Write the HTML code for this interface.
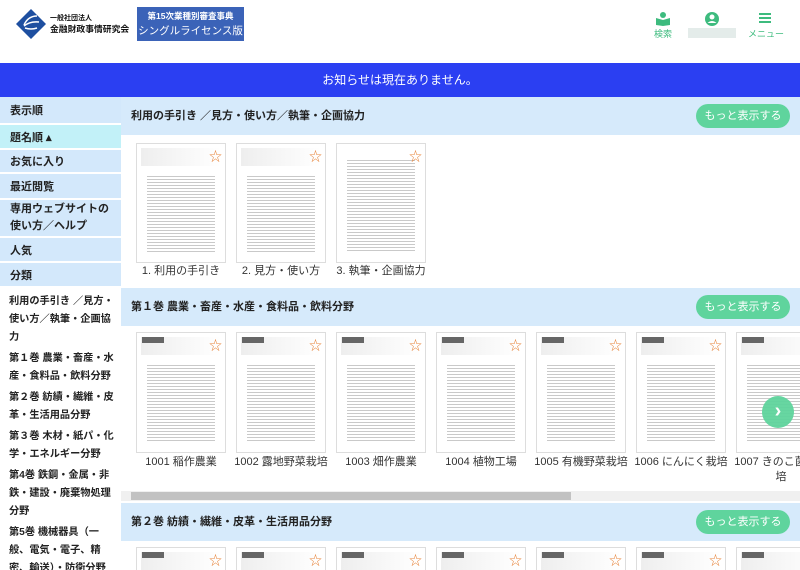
<!DOCTYPE html>
<html><head><meta charset="utf-8"><style>
*{margin:0;padding:0;box-sizing:border-box}
body{width:800px;height:570px;overflow:hidden;background:#fff;font-family:"Liberation Sans","Noto Sans CJK JP",sans-serif;position:relative}
.hdr{position:absolute;left:0;top:0;width:800px;height:63px;background:#fff}
.banner{position:absolute;left:0;top:63px;width:800px;height:34px;background:#2b3ff2;color:#fff;font-size:12px;text-align:center;line-height:34px}
.side{position:absolute;left:0;top:97px;width:121px;height:473px;background:#fff;overflow:hidden}
.si{background:#d3e8fb;border-bottom:2px solid #fff;font-size:11px;font-weight:bold;color:#222;padding:0 10px;display:flex;align-items:center}
.cat{font-size:10.2px;font-weight:bold;color:#222;padding:0 5px 0 9px;line-height:18px;margin-bottom:3px}
.main{position:absolute;left:121px;top:97px;width:679px;height:473px;background:#fff;overflow:hidden}
.tb{position:absolute;left:0;width:679px;height:38px;background:#d6eafb;font-size:11px;font-weight:bold;color:#222;padding-left:10px;line-height:38px}
.btn{position:absolute;right:10px;top:7px;width:94px;height:24px;border-radius:12px;background:#5fd49d;color:#fff;font-size:11px;font-weight:normal;text-align:center;line-height:24px}
.card{position:absolute;width:90px;border:1px solid #ddd;background:#fff;overflow:hidden}
.card .pg{position:absolute;left:10px;right:10px;top:30px;bottom:10px;background:repeating-linear-gradient(#fff 0 2px,#c9c9c9 2px 3px)}
.card .hd{position:absolute;left:4px;right:4px;top:4px;height:18px;background:linear-gradient(90deg,#eee,#fff)}
.card .tg{position:absolute;left:5px;top:4px;width:22px;height:6px;background:#666}
.card .st{position:absolute;right:3px;top:2px;color:#e8843a;font-size:13px}
.lb{position:absolute;width:100px;text-align:center;font-size:11px;color:#333;line-height:15px}
</style></head><body>
<div class="hdr">
 <svg style="position:absolute;left:15px;top:8px" width="32" height="32" viewBox="0 0 32 32"><polygon points="16,1 31,16 16,31 1,16" fill="#1e4fa0"/><path d="M9 17 Q13 8 22 8 M9 18 Q15 13 24 14 M10 20 Q16 22 22 20" stroke="#fff" stroke-width="1.5" fill="none"/></svg>
 <div style="position:absolute;left:50px;top:13px;font-size:7px;font-weight:bold;color:#111">一般社団法人</div>
 <div style="position:absolute;left:50px;top:22px;font-size:8.8px;font-weight:bold;color:#111;white-space:nowrap">金融財政事情研究会</div>
 <div style="position:absolute;left:137px;top:7px;width:107px;height:34px;background:#3b63b8;color:#fff;text-align:center"><div style="font-size:8.5px;font-weight:bold;margin-top:3px">第15次業種別審査事典</div><div style="font-size:10.5px;margin-top:1px">シングルライセンス版</div></div>
 <svg style="position:absolute;left:655px;top:12px" width="16" height="14" viewBox="0 0 16 14"><circle cx="8" cy="3" r="3" fill="#3dbb7e"/><path d="M1 6 L8 8 L15 6 L15 13 L8 14 L1 13Z" fill="#3dbb7e"/></svg>
 <div style="position:absolute;left:654px;top:27px;font-size:9px;color:#3dbb7e">検索</div>
 <svg style="position:absolute;left:704px;top:11px" width="16" height="16"><circle cx="8" cy="8" r="7" fill="#3dbb7e"/><circle cx="8" cy="6" r="2.5" fill="#fff"/><path d="M3.5 12 Q8 8 12.5 12" fill="#fff"/></svg>
 <div style="position:absolute;left:688px;top:28px;width:48px;height:10px;background:#e4ecea"></div>
 <div style="position:absolute;left:759px;top:13px;width:12px;height:2px;background:#3dbb7e;box-shadow:0 4px #3dbb7e,0 8px #3dbb7e"></div>
 <div style="position:absolute;left:748px;top:27px;font-size:9px;color:#3dbb7e">メニュー</div>
</div>
<div class="banner">お知らせは現在ありません。</div>
<div class="side">
 <div class="si" style="height:28px">表示順</div>
 <div class="si" style="height:25px;background:#c2f1f8">題名順 ▴</div>
 <div class="si" style="height:24px">お気に入り</div>
 <div class="si" style="height:26px">最近閲覧</div>
 <div class="si" style="height:38px;line-height:17px">専用ウェブサイトの使い方／ヘルプ</div>
 <div class="si" style="height:25px">人気</div>
 <div class="si" style="height:25px">分類</div>
 <div style="height:5px"></div>
 <div class="cat">利用の手引き ／見方・使い方／執筆・企画協力</div>
 <div class="cat">第１巻 農業・畜産・水産・食料品・飲料分野</div>
 <div class="cat">第２巻 紡績・繊維・皮革・生活用品分野</div>
 <div class="cat">第３巻 木材・紙パ・化学・エネルギー分野</div>
 <div class="cat">第4巻 鉄鋼・金属・非鉄・建設・廃棄物処理分野</div>
 <div class="cat">第5巻 機械器具（一般、電気・電子、精密、輸送）・防衛分野</div>
</div>
<div class="main">
 <div class="tb" style="top:0">利用の手引き ／見方・使い方／執筆・企画協力<div class="btn">もっと表示する</div></div>
 <div class="card" style="left:15px;top:46px;height:120px"><div class="hd"></div><div class="pg"></div><div class="st">☆</div></div>
 <div class="card" style="left:115px;top:46px;height:120px"><div class="hd"></div><div class="pg"></div><div class="st">☆</div></div>
 <div class="card" style="left:215px;top:46px;height:120px"><div class="pg" style="top:14px"></div><div class="st">☆</div></div>
 <div class="lb" style="left:10px;top:167px">1. 利用の手引き</div>
 <div class="lb" style="left:110px;top:167px">2. 見方・使い方</div>
 <div class="lb" style="left:210px;top:167px">3. 執筆・企画協力</div>

 <div class="tb" style="top:191px">第１巻 農業・畜産・水産・食料品・飲料分野<div class="btn">もっと表示する</div></div>
 <div class="card" style="left:15px;top:235px;height:121px"><div class="hd"></div><div class="tg"></div><div class="pg"></div><div class="st">☆</div></div>
 <div class="card" style="left:115px;top:235px;height:121px"><div class="hd"></div><div class="tg"></div><div class="pg"></div><div class="st">☆</div></div>
 <div class="card" style="left:215px;top:235px;height:121px"><div class="hd"></div><div class="tg"></div><div class="pg"></div><div class="st">☆</div></div>
 <div class="card" style="left:315px;top:235px;height:121px"><div class="hd"></div><div class="tg"></div><div class="pg"></div><div class="st">☆</div></div>
 <div class="card" style="left:415px;top:235px;height:121px"><div class="hd"></div><div class="tg"></div><div class="pg"></div><div class="st">☆</div></div>
 <div class="card" style="left:515px;top:235px;height:121px"><div class="hd"></div><div class="tg"></div><div class="pg"></div><div class="st">☆</div></div>
 <div class="card" style="left:615px;top:235px;height:121px"><div class="hd"></div><div class="tg"></div><div class="pg"></div><div class="st">☆</div></div>
 <div class="lb" style="left:10px;top:358px">1001 稲作農業</div>
 <div class="lb" style="left:110px;top:358px">1002 露地野菜栽培</div>
 <div class="lb" style="left:210px;top:358px">1003 畑作農業</div>
 <div class="lb" style="left:310px;top:358px">1004 植物工場</div>
 <div class="lb" style="left:410px;top:358px">1005 有機野菜栽培</div>
 <div class="lb" style="left:510px;top:358px">1006 にんにく栽培</div>
 <div class="lb" style="left:610px;top:358px">1007 きのこ菌床栽培</div>
 <div style="position:absolute;left:641px;top:299px;width:32px;height:32px;border-radius:50%;background:#5fd49d;opacity:.95;color:#fff;font-size:20px;text-align:center;line-height:30px;font-weight:bold">›</div>
 <div style="position:absolute;left:0;top:394px;width:679px;height:10px;background:#f0f0f0"><div style="position:absolute;left:10px;top:1px;width:440px;height:8px;background:#c2c2c2"></div></div>

 <div class="tb" style="top:406px">第２巻 紡績・繊維・皮革・生活用品分野<div class="btn">もっと表示する</div></div>
 <div class="card" style="left:15px;top:450px;height:40px"><div class="hd"></div><div class="tg"></div><div class="st">☆</div></div>
 <div class="card" style="left:115px;top:450px;height:40px"><div class="hd"></div><div class="tg"></div><div class="st">☆</div></div>
 <div class="card" style="left:215px;top:450px;height:40px"><div class="hd"></div><div class="tg"></div><div class="st">☆</div></div>
 <div class="card" style="left:315px;top:450px;height:40px"><div class="hd"></div><div class="tg"></div><div class="st">☆</div></div>
 <div class="card" style="left:415px;top:450px;height:40px"><div class="hd"></div><div class="tg"></div><div class="st">☆</div></div>
 <div class="card" style="left:515px;top:450px;height:40px"><div class="hd"></div><div class="tg"></div><div class="st">☆</div></div>
 <div class="card" style="left:615px;top:450px;height:40px"><div class="hd"></div><div class="tg"></div><div class="st">☆</div></div>
</div>
</body></html>
